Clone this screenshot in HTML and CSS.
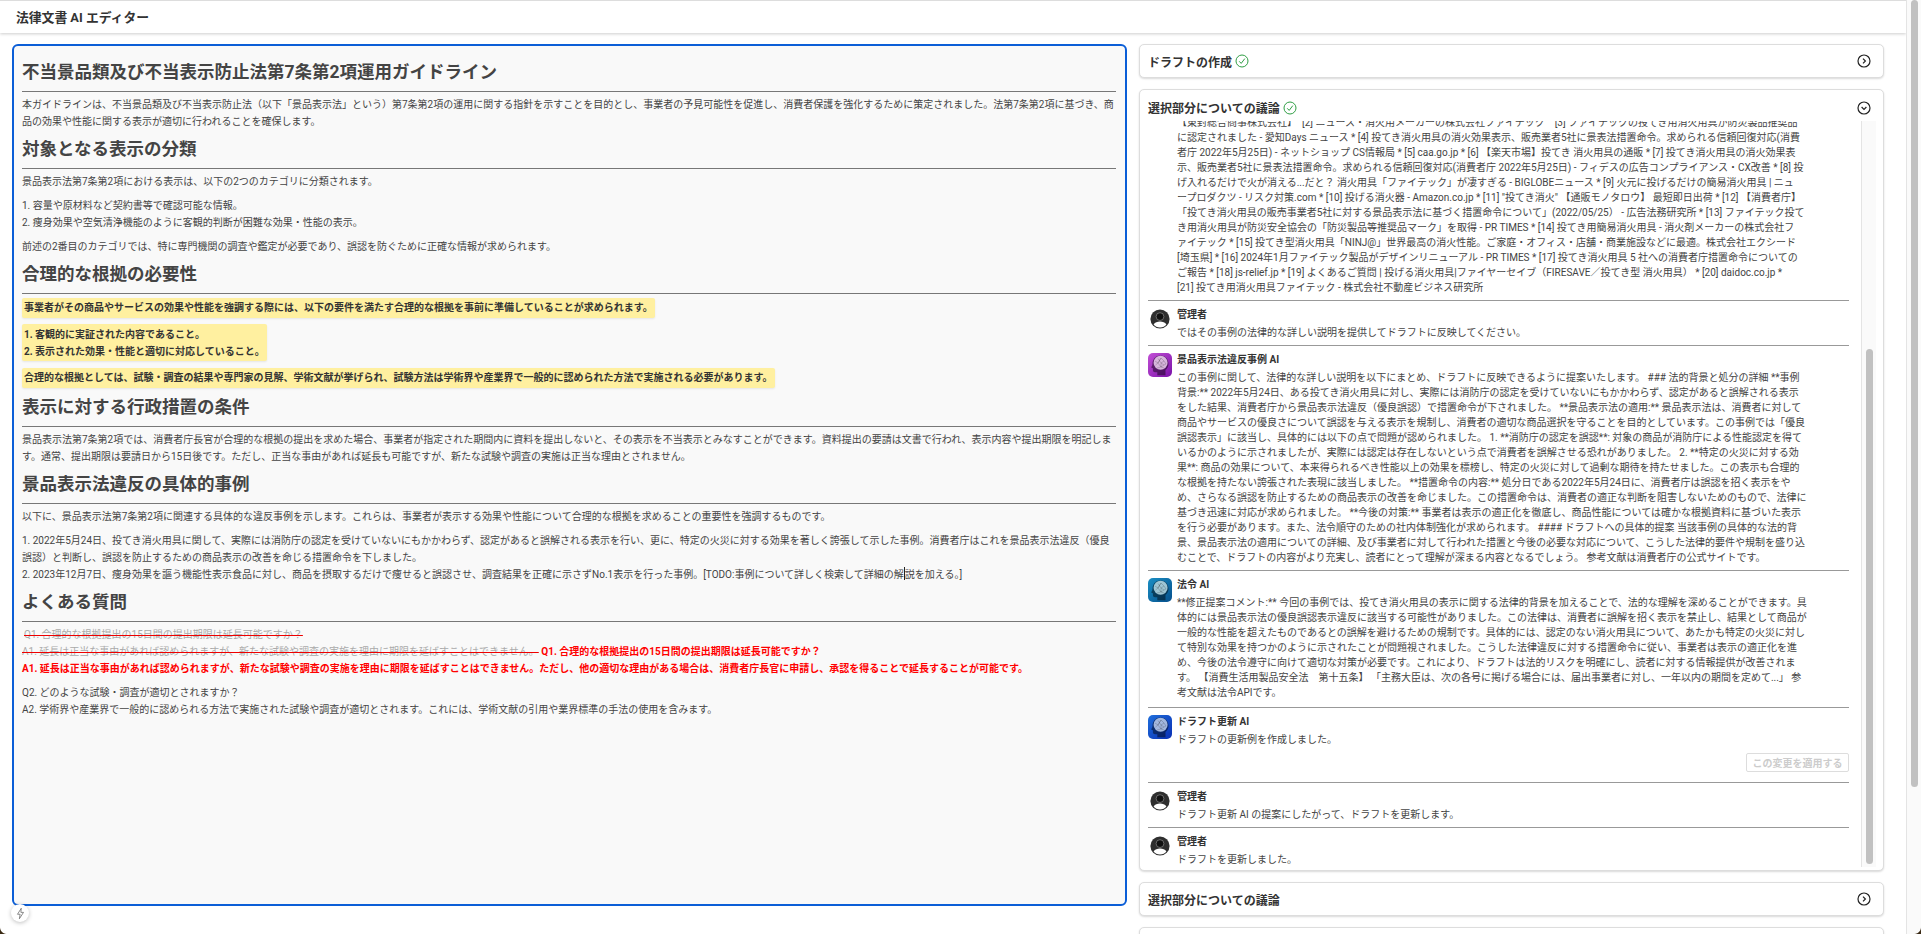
FILE: index.html
```html
<!DOCTYPE html>
<html lang="ja">
<head>
    <meta charset="UTF-8">
    <meta name="viewport" content="width=device-width, initial-scale=1.0">
    <title>法律文書 AI エディター</title>
    <link rel="stylesheet" href="styles.css">
</head>
<body>
<svg class="sprite" aria-hidden="true">
    <symbol id="icon-check" viewBox="0 0 14 14">
        <circle cx="7" cy="7" r="6" fill="none" stroke="#2f9e44" stroke-width="1"/>
        <path d="M4.2 7.3l2 2.1 3.6-4.8" fill="none" stroke="#2f9e44" stroke-width="1"/>
    </symbol>
    <symbol id="icon-right" viewBox="0 0 14 14">
        <circle cx="7" cy="7" r="6" fill="none" stroke="#222" stroke-width="1.2"/>
        <path d="M6 4.6L8.4 7 6 9.4" fill="none" stroke="#222" stroke-width="1.2"/>
    </symbol>
    <symbol id="icon-down" viewBox="0 0 14 14">
        <circle cx="7" cy="7" r="6" fill="none" stroke="#222" stroke-width="1.2"/>
        <path d="M4.6 6L7 8.4 9.4 6" fill="none" stroke="#222" stroke-width="1.2"/>
    </symbol>
    <symbol id="icon-user" viewBox="0 0 20 20">
        <circle cx="10" cy="10" r="9.6" fill="#2f2f2f"/>
        <path d="M3.6 15.4C5 13.4 7.3 12.6 10 12.6s5 .8 6.4 2.8C15 17.4 12.7 18.4 10 18.4s-5-1-6.4-3z" fill="#fff"/>
        <circle cx="10" cy="7.6" r="3.9" fill="#111" stroke="#8a8a8a" stroke-width=".7"/>
    </symbol>
    <symbol id="icon-head" viewBox="0 0 24 24">
        <path d="M12.5 2.600C8 2.600 4.500 6 4.500 10.800c0 1-.3 1.800-1 2.900-.4.600-.2 1.100.5 1.300l.9.2v2.100c0 1.200.9 2 2.100 2h2.300v3h8.200v-5.300c1.900-1.400 3-3.600 3-6C20.500 5.900 17 2.600 12.500 2.600z" fill="#000" fill-opacity=".45"/>
        <circle cx="12.600" cy="9.800" r="7" fill="currentColor" fill-opacity=".82"/>
        <path d="M7 8l3 2 3-5 3 3 2 3M7.500 12l2.500-2 3 4 3-2 2-1M10 10l3-5M13 14l0-4 3-2M10 5.500l3 4.500M13 10l3 2M9 15l4-1 3 1" fill="none" stroke="#000" stroke-opacity=".32" stroke-width=".5"/>
    </symbol>
</svg>

<div class="page">
    <header class="app-bar">法律文書 AI エディター</header>

    <main class="layout">
        <article class="doc">
            <h1>不当景品類及び不当表示防止法第7条第2項運用ガイドライン</h1>
            <p>本ガイドラインは、不当景品類及び不当表示防止法（以下「景品表示法」という）第7条第2項の運用に関する指針を示すことを目的とし、事業者の予見可能性を促進し、消費者保護を強化するために策定されました。法第7条第2項に基づき、商品の効果や性能に関する表示が適切に行われることを確保します。</p>

            <h2>対象となる表示の分類</h2>
            <p>景品表示法第7条第2項における表示は、以下の2つのカテゴリに分類されます。</p>
            <p>1. 容量や原材料など契約書等で確認可能な情報。<br>2. 痩身効果や空気清浄機能のように客観的判断が困難な効果・性能の表示。</p>
            <p>前述の2番目のカテゴリでは、特に専門機関の調査や鑑定が必要であり、誤認を防ぐために正確な情報が求められます。</p>

            <h2>合理的な根拠の必要性</h2>
            <p class="mark">事業者がその商品やサービスの効果や性能を強調する際には、以下の要件を満たす合理的な根拠を事前に準備していることが求められます。</p>
            <p class="mark">1. 客観的に実証された内容であること。<br>2. 表示された効果・性能と適切に対応していること。</p>
            <p class="mark">合理的な根拠としては、試験・調査の結果や専門家の見解、学術文献が挙げられ、試験方法は学術界や産業界で一般的に認められた方法で実施される必要があります。</p>

            <h2>表示に対する行政措置の条件</h2>
            <p>景品表示法第7条第2項では、消費者庁長官が合理的な根拠の提出を求めた場合、事業者が指定された期間内に資料を提出しないと、その表示を不当表示とみなすことができます。資料提出の要請は文書で行われ、表示内容や提出期限を明記します。通常、提出期限は要請日から15日後です。ただし、正当な事由があれば延長も可能ですが、新たな試験や調査の実施は正当な理由とされません。</p>

            <h2>景品表示法違反の具体的事例</h2>
            <p>以下に、景品表示法第7条第2項に関連する具体的な違反事例を示します。これらは、事業者が表示する効果や性能について合理的な根拠を求めることの重要性を強調するものです。</p>
            <p>1. 2022年5月24日、投てき消火用具に関して、実際には消防庁の認定を受けていないにもかかわらず、認定があると誤解される表示を行い、更に、特定の火災に対する効果を著しく誇張して示した事例。消費者庁はこれを景品表示法違反（優良誤認）と判断し、誤認を防止するための商品表示の改善を命じる措置命令を下しました。<br>2. 2023年12月7日、痩身効果を謳う機能性表示食品に対し、商品を摂取するだけで痩せると誤認させ、調査結果を正確に示さずNo.1表示を行った事例。[TODO:事例について詳しく検索して詳細の解<span class="caret"></span>説を加える。]</p>

            <h2>よくある質問</h2>
            <p><del class="first">Q1. 合理的な根拠提出の15日間の提出期限は延長可能ですか？</del><br><del>A1. 延長は正当な事由があれば認められますが、新たな試験や調査の実施を理由に期限を延ばすことはできません。</del> <ins>Q1. 合理的な根拠提出の15日間の提出期限は延長可能ですか？<br>A1. 延長は正当な事由があれば認められますが、新たな試験や調査の実施を理由に期限を延ばすことはできません。ただし、他の適切な理由がある場合は、消費者庁長官に申請し、承認を得ることで延長することが可能です。</ins></p>
            <p>Q2. どのような試験・調査が適切とされますか？<br>A2. 学術界や産業界で一般的に認められる方法で実施された試験や調査が適切とされます。これには、学術文献の引用や業界標準の手法の使用を含みます。</p>
        </article>

        <aside class="side">
            <section class="card">
                <div class="card-head">
                    <span class="card-title">ドラフトの作成 <svg class="ic-check"><use href="#icon-check"/></svg></span>
                    <svg class="ic-toggle"><use href="#icon-right"/></svg>
                </div>
            </section>

            <section class="card">
                <div class="card-head card-head-open">
                    <span class="card-title">選択部分についての議論 <svg class="ic-check"><use href="#icon-check"/></svg></span>
                    <svg class="ic-toggle"><use href="#icon-down"/></svg>
                </div>
                <div class="chat">
                    <div class="chat-view">
                        <div class="chat-log">
                            <div class="msg msg-cut">
                                <div class="msg-body">
                                    <div class="msg-text">【東封総合商事株式会社】　[2] ニュース・消火用メーカーの株式会社ファイテック　[3] ファイテックの投てき用消火用具が防災製品推奨品<br>
                                    に認定されました - 愛知Days ニュース * [4] 投てき消火用具の消火効果表示、販売業者5社に景表法措置命令。求められる信頼回復対応(消費<br>
                                    者庁 2022年5月25日) - ネットショップ CS情報局 * [5] caa.go.jp * [6] 【楽天市場】投てき 消火用具の通販 * [7] 投てき消火用具の消火効果表<br>
                                    示、販売業者5社に景表法措置命令。求められる信頼回復対応(消費者庁 2022年5月25日) - フィデスの広告コンプライアンス・CX改善 * [8] 投<br>
                                    げ入れるだけで火が消える...だと？ 消火用具「ファイテック」が凄すぎる - BIGLOBEニュース * [9] 火元に投げるだけの簡易消火用具 | ニュ<br>
                                    ープロダクツ - リスク対策.com * [10] 投げる消火器 - Amazon.co.jp * [11] "投てき消火" 【通販モノタロウ】 最短即日出荷 * [12] 【消費者庁】<br>
                                    「投てき消火用具の販売事業者5社に対する景品表示法に基づく措置命令について」(2022/05/25） - 広告法務研究所 * [13] ファイテック投て<br>
                                    き用消火用具が防災安全協会の「防災製品等推奨品マーク」を取得 - PR TIMES * [14] 投てき用簡易消火用具 - 消火剤メーカーの株式会社フ<br>
                                    ァイテック * [15] 投てき型消火用具「NINJ@」世界最高の消火性能。ご家庭・オフィス・店舗・商業施設などに最適。株式会社エクシード<br>
                                    [埼玉県] * [16] 2024年1月ファイテック製品がデザインリニューアル - PR TIMES * [17] 投てき消火用具 5 社への消費者庁措置命令についての<br>
                                    ご報告 * [18] js-relief.jp * [19] よくあるご質問 | 投げる消火用具|ファイヤーセイブ（FIRESAVE／投てき型 消火用具） * [20] daidoc.co.jp *<br>
                                    [21] 投てき用消火用具ファイテック - 株式会社不動産ビジネス研究所</div>
                                </div>
                            </div>

                            <div class="msg">
                                <span class="avatar-user"><svg><use href="#icon-user"/></svg></span>
                                <div class="msg-body">
                                    <div class="msg-name">管理者</div>
                                    <div class="msg-text">ではその事例の法律的な詳しい説明を提供してドラフトに反映してください。</div>
                                </div>
                            </div>

                            <div class="msg">
                                <span class="avatar avatar-law"><svg><use href="#icon-head"/></svg></span>
                                <div class="msg-body">
                                    <div class="msg-name">景品表示法違反事例 AI</div>
                                    <div class="msg-text">この事例に関して、法律的な詳しい説明を以下にまとめ、ドラフトに反映できるように提案いたします。 ### 法的背景と処分の詳細 **事例<br>
                                    背景:** 2022年5月24日、ある投てき消火用具に対し、実際には消防庁の認定を受けていないにもかかわらず、認定があると誤解される表示<br>
                                    をした結果、消費者庁から景品表示法違反（優良誤認）で措置命令が下されました。 **景品表示法の適用:** 景品表示法は、消費者に対して<br>
                                    商品やサービスの優良さについて誤認を与える表示を規制し、消費者の適切な商品選択を守ることを目的としています。この事例では「優良<br>
                                    誤認表示」に該当し、具体的には以下の点で問題が認められました。 1. **消防庁の認定を誤認**: 対象の商品が消防庁による性能認定を得て<br>
                                    いるかのように示されましたが、実際には認定は存在しないという点で消費者を誤解させる恐れがありました。 2. **特定の火災に対する効<br>
                                    果**: 商品の効果について、本来得られるべき性能以上の効果を標榜し、特定の火災に対して過剰な期待を持たせました。この表示も合理的<br>
                                    な根拠を持たない誇張された表現に該当しました。 **措置命令の内容:** 処分日である2022年5月24日に、消費者庁は誤認を招く表示をや<br>
                                    め、さらなる誤認を防止するための商品表示の改善を命じました。この措置命令は、消費者の適正な判断を阻害しないためのもので、法律に<br>
                                    基づき迅速に対応が求められました。 **今後の対策:** 事業者は表示の適正化を徹底し、商品性能については確かな根拠資料に基づいた表示<br>
                                    を行う必要があります。また、法令順守のための社内体制強化が求められます。 #### ドラフトへの具体的提案 当該事例の具体的な法的背<br>
                                    景、景品表示法の適用についての詳細、及び事業者に対して行われた措置と今後の必要な対応について、こうした法律的要件や規制を盛り込<br>
                                    むことで、ドラフトの内容がより充実し、読者にとって理解が深まる内容となるでしょう。 参考文献は消費者庁の公式サイトです。</div>
                                </div>
                            </div>

                            <div class="msg msg-statute">
                                <span class="avatar avatar-statute"><svg><use href="#icon-head"/></svg></span>
                                <div class="msg-body">
                                    <div class="msg-name">法令 AI</div>
                                    <div class="msg-text">**修正提案コメント:** 今回の事例では、投てき消火用具の表示に関する法律的背景を加えることで、法的な理解を深めることができます。具<br>
                                    体的には景品表示法の優良誤認表示違反に該当する可能性がありました。この法律は、消費者に誤解を招く表示を禁止し、結果として商品が<br>
                                    一般的な性能を超えたものであるとの誤解を避けるための規制です。具体的には、認定のない消火用具について、あたかも特定の火災に対し<br>
                                    て特別な効果を持つかのように示されたことが問題視されました。こうした法律違反に対する措置命令に従い、事業者は表示の適正化を進<br>
                                    め、今後の法令遵守に向けて適切な対策が必要です。これにより、ドラフトは法的リスクを明確にし、読者に対する情報提供が改善されま<br>
                                    す。 【消費生活用製品安全法　第十五条】 「主務大臣は、次の各号に掲げる場合には、届出事業者に対し、一年以内の期間を定めて...」 参<br>
                                    考文献は法令APIです。</div>
                                </div>
                            </div>

                            <div class="msg">
                                <span class="avatar avatar-draft"><svg><use href="#icon-head"/></svg></span>
                                <div class="msg-body">
                                    <div class="msg-name">ドラフト更新 AI</div>
                                    <div class="msg-text">ドラフトの更新例を作成しました。</div>
                                    <div class="msg-actions"><button class="btn-apply" disabled>この変更を適用する</button></div>
                                </div>
                            </div>

                            <div class="msg">
                                <span class="avatar-user"><svg><use href="#icon-user"/></svg></span>
                                <div class="msg-body">
                                    <div class="msg-name">管理者</div>
                                    <div class="msg-text">ドラフト更新 AI の提案にしたがって、ドラフトを更新します。</div>
                                </div>
                            </div>

                            <div class="msg">
                                <span class="avatar-user"><svg><use href="#icon-user"/></svg></span>
                                <div class="msg-body">
                                    <div class="msg-name">管理者</div>
                                    <div class="msg-text">ドラフトを更新しました。</div>
                                </div>
                            </div>
                        </div>
                    </div>
                    <div class="rail rail-chat"><div class="thumb"></div></div>
                </div>
            </section>

            <section class="card">
                <div class="card-head">
                    <span class="card-title">選択部分についての議論</span>
                    <svg class="ic-toggle"><use href="#icon-right"/></svg>
                </div>
            </section>

            <section class="card card-cut"></section>
        </aside>
    </main>
</div>
<div class="rail rail-page"><div class="thumb"></div></div>

<button class="bolt" aria-label="ショートカット">
    <svg viewBox="0 0 12 16" width="9" height="13"><path d="M7 1L2 9h3.500L4.500 15 10 6.500H6.500z" fill="none" stroke="#666" stroke-width="1"/></svg>
</button>
<div class="corner corner-left"></div>
<div class="corner corner-right"></div>
</body>
</html>
```

FILE: styles.css
```css
* {
    box-sizing: border-box;
}

body {
    display: flex;
    margin: 0;
    height: 100vh;
    overflow: hidden;
    font-family: Roboto, "Noto Sans CJK JP", sans-serif;
    font-size: 10px;
    color: #444;
    background: #fff;
}

.sprite {
    display: none;
}

.page {
    flex: 1;
    min-width: 0;
    overflow: hidden;
}

/* drawn scrollbars */
.rail {
    flex: none;
    width: 15px;
    padding: 0 4px;
    background: #fafafa;
    border-left: 1px solid #e4e4e4;
}

.thumb {
    width: 7px;
    background: #c1c1c1;
    border-radius: 4px;
}

.rail-page .thumb {
    height: 787px;
}

.rail-chat {
    padding-top: 228px;
}

.rail-chat .thumb {
    height: 515px;
}

.app-bar {
    height: 33px;
    padding-left: 16px;
    border-top: 1px solid #ddd;
    font-size: 12.8px;
    font-weight: 700;
    line-height: 33px;
    color: #333;
    background: #fff;
    box-shadow: 0 1px 3px rgba(0, 0, 0, .2);
}

.layout {
    display: flex;
    align-items: flex-start;
    gap: 12px;
    padding: 11px 22px 0 12px;
}

/* left document */
.doc {
    flex: none;
    width: 1115px;
    height: 862px;
    padding: 5.5px 9px 0 8px;
    border: 2px solid #0b5ed7;
    border-radius: 6px;
    background: #f9f9f9;
}

.doc h1,
.doc h2 {
    margin: 9.5px 0 3.5px;
    padding-bottom: 8px;
    border-bottom: 1px solid #777;
    font-size: 17.5px;
    font-weight: 700;
    line-height: 21px;
    color: #444;
}

.doc h1 {
    margin: 10px 0 4px;
}

.doc p {
    margin: 0 0 7px;
    line-height: 17px;
}

.doc p:has(+ h2) {
    margin-bottom: 0;
}

.doc .mark {
    width: fit-content;
    margin-bottom: 6.5px;
    padding: 1.5px 2px;
    border-radius: 2px;
    font-weight: 700;
    color: #333;
    background: #fff0a0;
    box-shadow: 0 1px 2px rgba(0, 0, 0, .08);
}

.doc h2 + .mark {
    margin-top: 2px;
}

.doc p.mark:has(+ h2) {
    margin-bottom: 0;
}

.caret {
    display: inline-block;
    height: 13px;
    margin-bottom: -2px;
    border-left: 1px solid #222;
}

del {
    color: #aaa;
    text-decoration: line-through #e00 1px;
}

del.first {
    padding-left: 2px;
}

ins {
    font-weight: 700;
    color: #f00;
    text-decoration: none;
}

/* right column */
.side {
    flex: 1;
    display: flex;
    flex-direction: column;
    gap: 11px;
    min-width: 0;
}

.card {
    flex: none;
    border: 1px solid #ddd;
    border-radius: 5px;
    background: #fff;
    box-shadow: 0 1px 2px rgba(0, 0, 0, .15);
}

.card-cut {
    height: 34px;
}

.card-head {
    display: flex;
    align-items: center;
    justify-content: space-between;
    height: 32px;
    padding: 0 12px 0 8px;
}

.card-head-open {
    height: 31px;
    padding-top: 4px;
}

.card-title {
    display: flex;
    align-items: center;
    gap: 3px;
    font-size: 12px;
    font-weight: 700;
    color: #333;
}

.ic-check {
    width: 14px;
    height: 14px;
}

.ic-toggle {
    width: 14px;
    height: 14px;
}

.chat {
    display: flex;
    height: 746px;
    margin: 0 7px 3px 8px;
}

/* long log: pinned to the newest message, older ones are cut at the top */
.chat-view {
    flex: 1;
    display: flex;
    flex-direction: column-reverse;
    min-width: 0;
    padding-right: 12px;
    overflow: hidden;
}

.chat-log {
    flex: none;
}

.msg {
    display: flex;
    gap: 5px;
    padding: 5.5px 0;
    border-top: 1px solid #999;
}

.msg:last-child {
    padding-bottom: .5px;
}

.msg-statute {
    padding-bottom: 7.5px;
}

/* message whose head has scrolled out of view */
.msg-cut {
    padding-top: 0;
    padding-left: 29px;
    border-top: 0;
}

.avatar {
    flex: none;
    display: block;
    width: 24px;
    height: 24px;
    margin-top: 1px;
    border-radius: 5px;
    color: #e8eefc;
}

.avatar svg {
    display: block;
    width: 24px;
    height: 24px;
}

.avatar-law {
    background: linear-gradient(135deg, #c24fd6, #7a12a8);
    color: #f3d8f5;
}

.avatar-statute {
    background: linear-gradient(135deg, #1a8fc4, #064f8c);
    color: #bfe3ee;
}

.avatar-draft {
    background: linear-gradient(135deg, #1f6fdc, #0a2fb4);
    color: #c3d6f6;
}

.avatar-user {
    flex: none;
    display: block;
    width: 24px;
    height: 24px;
    padding: 2px 2px 0;
}

.avatar-user svg {
    display: block;
    width: 20px;
    height: 20px;
}

.msg-body {
    flex: 1;
    min-width: 0;
}

.msg-name {
    margin-bottom: 3px;
    font-weight: 700;
    line-height: 15px;
    color: #333;
}

.msg-text {
    line-height: 15px;
    white-space: nowrap;
}

.msg-actions {
    display: flex;
    justify-content: flex-end;
    margin: 6.5px 0 4.5px;
}

.btn-apply {
    width: 103px;
    height: 19px;
    padding: 0;
    border: 1px solid #ddd;
    border-radius: 2px;
    font: 700 10px Roboto, "Noto Sans CJK JP", sans-serif;
    color: #ccc;
    background: #fff;
}

/* overlays */
.bolt {
    position: fixed;
    left: 11px;
    top: 904px;
    width: 18px;
    height: 18px;
    padding: 0;
    display: flex;
    align-items: center;
    justify-content: center;
    border: 0;
    border-radius: 50%;
    background: #fff;
    box-shadow: 0 1px 4px rgba(0, 0, 0, .25);
}

.corner {
    position: fixed;
    bottom: 0;
    width: 7px;
    height: 7px;
}

.corner-left {
    left: 0;
    background: radial-gradient(circle at 100% 0, transparent 6.5px, #3a2a14 7.5px);
}

.corner-right {
    right: 0;
    background: radial-gradient(circle at 0 0, transparent 6.5px, #3a2a14 7.5px);
}
```
